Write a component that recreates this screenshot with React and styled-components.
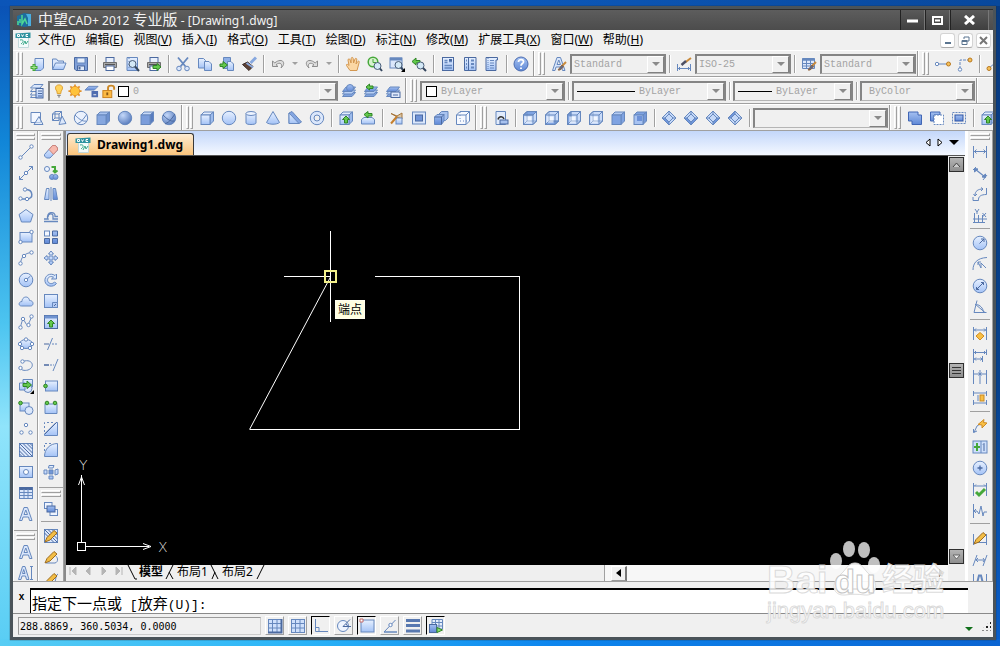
import React, { useState } from 'react';
import styled, { createGlobalStyle, css } from 'styled-components';

const GlobalStyle = createGlobalStyle`
  *, *::before, *::after {
    box-sizing: border-box;
  }

  body {
    margin: 0;
    font-family: 'Noto Sans', 'Noto Sans CJK SC', sans-serif;
    font-size: 12px;
    color: #000;
  }

  button, input, select {
    font: inherit;
    color: inherit;
    margin: 0;
    padding: 0;
    border: none;
    border-radius: 0;
    background: none;
  }
`;

/* ---------- icons ---------- */

const S = '#6688be';
const D = '#4a69a0';
const F = 'url(#face)';
const FD = 'url(#faceDark)';
const GREEN = '#46a83a';
const GOLD = '#f8bf45';
const GREY = '#8d8d8d';

const Defs = styled.svg`
  position: absolute;
  width: 0;
  height: 0;
`;

const Glyph = styled.svg`
  display: block;
  flex: none;
  width: ${props => props.$size || 16}px;
  height: ${props => props.$size || 16}px;
`;

const Cube = ({ front = F, top = '#e3edfd', side = '#9dbbec', children }) => (
  <>
    <path d="M2 5 5 2H14.5L11 5Z" fill={top} />
    <path d="M11 5 14.5 2V11L11 14.5Z" fill={side} />
    <rect x="2" y="5" width="9" height="9.5" fill={front} />
    {children}
  </>
);

const OpenCube = ({ fill }) => (
  <>
    <path d="M1.500 5 5 1.500H14.500V11L11 14.500H1.500Z" fill="#c9dbf9" />
    {fill && <path d={fill} fill="#7ea3e2" />}
    <rect x="3.500" y="6.500" width="6" height="6" fill="#f1f6ff" stroke="none" />
    <path d="M1.500 5H11V14.500M11 5 14.500 1.500" />
    <path d="M5 1.500V11H14.500M1.500 14.500 5 11" strokeOpacity=".6" />
    <path d="M1.500 5 5 1.500H14.500V11L11 14.500H1.500Z" />
  </>
);

const Diamond = ({ fill }) => (
  <>
    <path d="M8 1 15 8 8 15 1 8Z" fill="#c4d8f8" />
    <path d={fill} fill="#6f96dc" stroke="none" />
    <path d="M8 1 15 8 8 15 1 8ZM8 4 12 8 8 12 4 8ZM1 8H4M12 8H15M8 12V15M8 1V4" />
  </>
);

const Printer = () => (
  <>
    <rect x="4" y="1.500" width="8" height="5" fill="#e9f0fc" stroke={D} />
    <path d="M1.500 6.500H14.500V11.500H1.500Z" fill="#a8a8a8" stroke="#6d6d6d" />
    <path d="M3 8.500H13" stroke="#555" />
    <rect x="4" y="10" width="8" height="4.500" fill="#fff" stroke={D} />
  </>
);

const Lens = ({ x = 9, y = 9 }) => (
  <>
    <circle cx={x} cy={y} r="3.500" fill="#d4e9f7" stroke="#4a5e78" />
    <path d={`M${x + 2.5} ${y + 2.5} 15 15`} stroke="#34465e" strokeWidth="2" />
  </>
);

const Layers = () => (
  <>
    <path d="M5 9.500H14.500L11 13.500H1.500Z" fill="#7fa2de" />
    <path d="M5 7H14.500L11 11H1.500Z" fill="#b9d0f5" />
    <path d="M5 4H14.500L11 8.500H1.500Z" fill={FD} />
  </>
);

const Brush = () => (
  <>
    <path d="M15 6 11 10" stroke="#c98a3b" strokeWidth="2" />
    <path d="M11 9 12.500 11 9 14 7 14Z" fill="#4d6aa0" stroke="#94653a" />
  </>
);

const Dim = () => <path d="M1.500 2V14M14.500 2V14M2 7.500H14M4.500 5.500 2.500 7.500 4.500 9.500M11.500 5.500 13.500 7.500 11.500 9.500" />;

const LetterA = () => (
  <path d="M1.500 14.500 6 1.500H9.500L14 14.500H11.500L10.500 11H5L4 14.500ZM6 8.500H9.500L7.800 4Z" fill="#d9e6fb" />
);

const Pencil = () => (
  <path d="M2 14 4 9.500 11 2.500 14 5 7 12Z" fill="#f2bd45" stroke="#9a6a21" />
);

const UpArrow = () => (
  <path d="M8 6 11.500 9.500H9.500V13H6.500V9.500H4.500Z" fill="#63c94c" stroke="#2f8427" />
);

const Node = ({ x, y, c = '#fff' }) => <circle cx={x} cy={y} r="1.700" fill={c} />;

const ICONS = {
  New: <><path d="M6 2.500H14.500V12L12 14.500H6Z" fill={F} /><path d="M5 8V15M1.500 11.500H8.500" stroke={GREEN} strokeWidth="3" /><path d="M5 9V14M2.500 11.500H7.500" stroke="#a2e58d" /></>,
  Open: <><path d="M1.500 13.500V3H5.500L7 5H12.500V7" fill="#dbe7fb" /><path d="M1.500 13.500 4.500 7H15L12.500 13.500Z" fill={F} /></>,
  Save: <><path d="M1.500 1.500H14.500V14.500H3L1.500 13Z" fill="#7f9fd8" stroke={D} /><rect x="4" y="2" width="8" height="5" fill="#e6effc" /><rect x="4.500" y="10" width="7" height="4.500" fill="#dfe9f9" stroke={D} /><path d="M6.500 11V13.500" stroke={D} strokeWidth="2" /></>,
  Print: <Printer />,
  'Print preview': <><path d="M3 1.500H13.500V14.500H3Z" fill={F} /><path d="M5 2V14" strokeDasharray="1 2" /><Lens x={8.5} y={8} /></>,
  Publish: <><Printer /><path d="M7 9.500H11V7.500L15 11 11 14.500V12.500H7Z" fill="#63c94c" stroke="#2f8427" /></>,
  Cut: <><path d="M3 1.500 10.500 10.500M13 1.500 5.500 10.500" strokeWidth="1.800" /><circle cx="4" cy="12.500" r="2.300" fill="#dbe7fb" /><circle cx="12" cy="12.500" r="2.300" fill="#dbe7fb" /></>,
  Copy: <><path d="M1.500 2.500H6.500L8.500 4.500V12H1.500Z" fill={F} /><path d="M7.500 5.500H12L14.500 8V14.500H7.500Z" fill={F} /></>,
  Paste: <><path d="M4.500 1.500H11.500V12.500H4.500Z" fill="#8fb0e6" /><path d="M8.500 5.500H12L14.500 8V14.500H8.500Z" fill={F} /><path d="M1 8H4V5.500L8.500 9 4 12.500V10.500H1Z" fill="#63c94c" stroke="#2f8427" /></>,
  'Match properties': <><path d="M15 1.500 9.500 7" stroke="#87a8df" strokeWidth="3" /><path d="M1.500 8.500 6.500 6 12 10.500 8 14.500Z" fill="#5c4136" stroke="#3b2b25" /><path d="M5.500 7 12 11.500" stroke="#8caade" strokeWidth="2" /></>,
  Undo: <><path d="M2.500 5V10.500H8L6 8.700C10 5.500 13 8 11 12 17 7 12 1 4.800 6.900Z" fill="#ddd" stroke={GREY} /></>,
  Redo: <><path d="M13.500 5V10.500H8L10 8.700C6 5.500 3 8 5 12-1 7 4 1 11.200 6.900Z" fill="#ddd" stroke={GREY} /></>,
  Pan: <path d="M5 14.500 1.500 9.500C1 8 2.500 7.800 4 9.500L3 4C3 2.500 4.800 2.500 5.200 4L6 7 6.200 2.500C6.300 1 8 1 8.200 2.500L8.600 7 10 3C10.500 1.800 12 2.300 11.800 3.800L11 8 12.800 5.500C13.800 4.500 14.800 5.500 14 7L12 14.500Z" fill="#fbd7a4" stroke="#d39751" />,
  'Zoom realtime': <><circle cx="6" cy="6" r="4.800" fill="#d7f2cf" stroke={GREEN} strokeWidth="1.500" /><path d="M6 3V6.500H9" stroke={GREEN} /><Lens x={10.5} y={10} /></>,
  'Zoom window': <><rect x="1" y="2" width="12" height="10" fill="#dbe7fb" /><path d="M1 3H13" strokeWidth="3" /><Lens x={9.5} y={9} /><path d="M16 12V16H12Z" fill="#000" stroke="none" /></>,
  'Zoom previous': <><path d="M1 5.500 5 2V4.500H9V7H5V9Z" fill="#63c94c" stroke="#2f8427" /><Lens x={9.5} y={9.5} /></>,
  Properties: <><rect x="2.500" y="1.500" width="11" height="13" fill={F} stroke={D} /><path d="M4.500 4.500H7.500M4.500 6.500H7.500M9 5.500H12M4.500 9.500H12M4.500 12H12" strokeWidth="1.300" /><rect x="9" y="3" width="3" height="2" fill={D} stroke="none" /></>,
  'Design center': <><path d="M2.500 1.500H14V14.500H2.500ZM6.500 1.500V14.500" fill={F} stroke={D} /><path d="M9 4.500H12M9 8H12M9 11.500H12M4 4.500H5M4 8H5M4 11.500H5" strokeWidth="2" /></>,
  'Tool palettes': <><path d="M2 1.500H13.500V4H12V14.500H2Z" fill={F} stroke={D} /><path d="M4 2V14" strokeDasharray="1 1" /><path d="M6 4.500H10M6 7H10M6 9.500H10M6 12H10" /></>,
  Help: <><circle cx="8" cy="8" r="7" fill={FD} stroke="#4a6bb0" /><path d="M5.500 6C5.500 2.500 11 3 10.500 6 10.300 7.500 8 7.800 8 9.800M8 11.500V13" stroke="#fff" strokeWidth="1.800" /></>,
  'Text style': <><LetterA /><Brush /></>,
  'Dimension style': <><path d="M1.500 8V15M14.500 8V15M2 12.500H14M4 11 2.500 12.500 4 14M12 11 13.500 12.500 12 14" /><path d="M15 2 9 6.500" stroke="#c98a3b" strokeWidth="2" /><path d="M10 5 5.500 9" stroke="#4d4f63" strokeWidth="2.500" /></>,
  'Table style': <><path d="M1.500 2.500H13.500V12.500H1.500Z" fill="#dfe9fb" /><path d="M1.500 3.500H13.500" strokeWidth="2.500" /><path d="M1.500 7.500H13.500M1.500 10H13.500M5.500 3V12.500M9.500 3V12.500" /><Brush /></>,
  'Snap from': <><path d="M3 8H13" /><Node x={2} y={8} /><circle cx="13.500" cy="8" r="2" fill="#f6c05a" stroke="#b87820" /></>,
  'Snap to extension': <><path d="M3 13V4H12" strokeDasharray="3 1" /><Node x={3} y={13.5} /><circle cx="13" cy="4" r="2" fill="#f6c05a" stroke="#b87820" /></>,
  'Snap to endpoint': <><path d="M3 12 14 3" /><circle cx="3" cy="12.500" r="2" fill="#f6c05a" stroke="#b87820" /></>,

  'Layer properties': <><path d="M5 1.500H14L11 5H1.500Z" fill="#dbe7fb" /><path d="M3.500 6 1.500 8.500H7M3 9.500 1.500 12H7M3 12.500 1.500 14.500H7" /><rect x="7" y="5.500" width="7" height="9.500" fill={F} stroke={D} /><path d="M9 8H13M9 10.500H13M9 13H13" stroke={D} /></>,
  'Layer current': <><Layers /><circle cx="9" cy="5" r="3.500" fill={FD} /></>,
  'Layer previous': <><Layers /><path d="M3 4 6.500 1V3H10V5.500H6.500V7Z" fill="#63c94c" stroke="#2f8427" /></>,
  'Layer states': <><Layers /><rect x="6" y="9" width="9" height="5.500" fill="#dfe9fb" stroke={D} /><path d="M8 12H13" stroke={D} /></>,
  Bulb: <><path d="M8 1C3.500 1 3 5.500 5.500 8L6 11H10L10.500 8C13 5.500 12.500 1 8 1Z" fill="#ffd35d" stroke="#d99723" /><path d="M6 13H10M7 14.800H9" stroke="#8a8a8a" strokeWidth="1.500" /></>,
  Sun: <><path d="M8 .5V15.500M.5 8H15.500M2.700 2.700 13.300 13.300M13.300 2.700 2.700 13.300" stroke="#e2912a" strokeWidth="2" /><circle cx="8" cy="8" r="5.300" fill="#ffc33c" stroke="#e2912a" /></>,
  Plot: <><path d="M5 2.500H15L11 6.500H1Z" fill={FD} /><path d="M8 8.500H15M9 10H14V13H9Z" stroke="#4f6db0" strokeWidth="2" /></>,
  Lock: <><path d="M7.500 7V4C7.500 1 14 1 14 4V6" stroke="#cb8724" strokeWidth="2" /><rect x="2" y="7" width="9.500" height="7.500" fill="#fbb944" stroke="#c87f1c" /><path d="M6.700 9V12" stroke="#8a5814" strokeWidth="2" /></>,

  '2D wireframe': <><path d="M2 2.500H11.500V12.500H2Z" fill="#f3f7ff" /><path d="M10 6.500 14 14.500H5Z" fill="#dbe7fb" fillOpacity=".6" /></>,
  '3D wireframe': <><path d="M1.500 4 4 1.500H10.500V8L8 10.500H1.500ZM1.500 4H8V10.500M8 4 10.500 1.500M4 1.500V8H10.500M1.500 10.500 4 8" /><path d="M11 6 15 13.500 8 14.500 Z" fill="#dbe7fb" /></>,
  '3D hidden': <><circle cx="8" cy="8" r="6.700" fill="#eaf1fd" /><path d="M2 5C5 8 9 12 13.500 11M14 4C11 8 9 12 4 14" /></>,
  'Flat shaded': <Cube front="#86a7df" top="#a9c3ef" side="#6d90ce" />,
  'Gouraud shaded': <circle cx="8" cy="8" r="6.700" fill="url(#ball)" />,
  'Flat with edges': <Cube front="#7b9ddb" top="#c9daf7" side="#587cc0" />,
  'Gouraud with edges': <><circle cx="8" cy="8" r="6.700" fill="url(#ball)" /><path d="M2 5C5 8 9 12 13.500 11M14 4C11 8 9 12 4 14" stroke={D} /></>,
  Box: <Cube />,
  Sphere: <circle cx="8" cy="8" r="6.700" fill={F} />,
  Cylinder: <><path d="M3 3.500V13C3 15 13 15 13 13V3.500" fill={F} /><ellipse cx="8" cy="3.500" rx="5" ry="2" fill="#eef4ff" /></>,
  Cone: <path d="M8 1.500 14.500 12.500C12 14.800 4 14.800 1.500 12.500Z" fill={F} />,
  Wedge: <><path d="M2 13.500V3L5 1.500 14.500 12 12 13.500Z" fill="#84a6e2" /><path d="M2 3 12 13.500H2Z" fill={F} /></>,
  Torus: <><circle cx="8" cy="8" r="6.700" fill="#dbe7fb" /><circle cx="8" cy="8" r="3" fill="#f0f0f0" /></>,
  Extrude: <><Cube /><UpArrow /></>,
  Revolve: <><path d="M1.500 9.500 4 7.500H12L14.500 9.500V14H1.500Z" fill={F} /><path d="M4 4.500 8 1.500V3.500H12V6H8V8Z" fill="#63c94c" stroke="#2f8427" /></>,
  Slice: <><path d="M2 3.500 8 6 13 3V9L9 7.500Z" fill="#d9c6a8" stroke="#a5753b" /><rect x="7" y="8" width="6" height="6" fill={F} /><path d="M2 13.500 8 6.500" stroke="#c57f2d" strokeWidth="2" /></>,
  Section: <><rect x="1.500" y="2" width="13" height="12" fill="#dbe7fb" /><rect x="4.500" y="5" width="7" height="6" fill="#6f93d8" stroke={D} /></>,
  Interfere: <><path d="M6 4 8.500 1.500H15V8L12.500 10.500H6Z" fill="#a9c3ef" /><path d="M1.500 7 4 4.500H11V11L8.500 14.500H1.500Z" fill={FD} /><path d="M1.500 7H8.500V14.500M8.500 7 11 4.500" stroke={D} /></>,
  'Solid profile': <><path d="M1.500 5 5 1.500H14.500V11L11 14.500H1.500ZM1.500 5H11V14.500M11 5 14.500 1.500" fill="#f6f9ff" /><path d="M5 2V11H14" strokeDasharray="1 2" /></>,
  'Named views': <><path d="M3 1.500H12.500V14.500H3Z" fill="#e2ecfc" /><path d="M5 9.500C6 6 10 6 11 9" stroke="#333" strokeWidth="1.500" /><rect x="7" y="10" width="8" height="4" fill="#a8c2ef" stroke={D} /></>,
  'Top view': <OpenCube fill="M1.500 5 5 1.500H14.500L11 5Z" />,
  'Bottom view': <OpenCube fill="M1.500 14.500 5 11H14.500L11 14.500Z" />,
  'Left view': <OpenCube fill="M1.500 5 5 1.500V11L1.500 14.500Z" />,
  'Right view': <OpenCube />,
  'Front view': <Cube front="#7fa3e2" top="#b5ccf3" side="#7fa3e2" />,
  'Back view': <Cube front="#a8c3f2" top="#7fa3e2" side="#7598d8"><rect x="5" y="6" width="5" height="5" fill="#6c91d8" stroke="none" /></Cube>,
  'SW isometric': <Diamond fill="M1 8 4 8 8 12V15Z" />,
  'SE isometric': <Diamond fill="M8 15V12L12 8H15ZM1 8H4L8 12V15Z" />,
  'NE isometric': <Diamond fill="M8 12 12 8H15L8 15Z" />,
  'NW isometric': <Diamond fill="M1 8H4L8 4V1Z" />,
  Union: <path d="M1.500 2H11V5H14.500V14.500H5V11H1.500Z" fill={FD} stroke="#4166b5" />,
  Subtract: <><path d="M1.500 2H11V5H5V11H1.500Z" fill={FD} stroke="#4166b5" /><path d="M5 5H14.500V14.500H5Z" fill="#fff" strokeDasharray="2 1" /></>,
  Intersect: <><path d="M1.500 2.500H14.500V13.500H1.500Z" strokeDasharray="2 1" /><rect x="4" y="5" width="8" height="6" fill={FD} stroke="#2f55a5" /></>,
  'Extrude faces': <><Cube /><UpArrow /></>,

  Line: <><path d="M3 13 13 3" /><Node x={2.5} y={13.5} /><Node x={13.5} y={2.5} /></>,
  'Construction line': <><path d="M1.500 14.500 14.500 1.500M1.500 11V14.500H5M11 1.500H14.500V5" /><Node x={8} y={8} /></>,
  Polyline: <><path d="M3 13H9C16 13 15 4 8.500 3.500" strokeWidth="1.500" /><Node x={2.500} y={12.5} /><Node x={9} y={13} /><Node x={7} y={3.5} /></>,
  Polygon: <path d="M8 1.500 15 6.500 12.500 14H3.500L1 6.500Z" fill={F} />,
  Rectangle: <><rect x="2" y="3.500" width="12" height="9.500" fill={F} /><Node x={2.500} y={13} /><Node x={13.500} y={3} /></>,
  Arc: <><path d="M2.500 13.500C3 7 7 3 13.500 2.500" /><Node x={2.500} y={13.5} /><Node x={6} y={6} /><Node x={13.500} y={2.5} /></>,
  Circle: <><circle cx="8" cy="8" r="6.800" fill={F} /><path d="M8 8 12.500 4" /><Node x={8} y={8} /></>,
  'Revision cloud': <path d="M3.500 13C0 13 .5 8.500 4 8.500 4 3 11 2.500 11.500 7.500 16 7.500 16 13 12.500 13Z" fill={F} />,
  Spline: <><path d="M2.500 13.500C4 6 5 4 7 8 9 12 10 12 13.500 3" /><Node x={2.500} y={13.5} /><Node x={5} y={5} /><Node x={10.500} y={11} /><Node x={13.500} y={2.5} /></>,
  Ellipse: <><ellipse cx="8" cy="8" rx="6.500" ry="4.500" fill={F} /><Node x={2} y={8} /><Node x={14} y={8} /><Node x={8} y={3.5} /><Node x={4} y={12} /><Node x={12} y={12} /></>,
  'Ellipse arc': <><path d="M5 4.500C14 1 18 10 10 13 6 14 3 13 2.500 11" /><Node x={4.5} y={4.5} /><Node x={2.5} y={11} /></>,
  'Insert block': <><path d="M5 1.500H14.500V9H5Z" fill={F} /><circle cx="10" cy="10.500" r="4" fill="#dbe7fb" /><path d="M1.500 5H7V12H1.500Z" fill={F} /><path d="M5 5.500H9V3L13.500 7 9 10.500V8.500H5Z" fill="#63c94c" stroke="#2f8427" /><path d="M16 12V16H12Z" fill="#000" stroke="none" /></>,
  'Make block': <><rect x="2" y="3" width="9" height="8" fill={F} /><circle cx="11" cy="10.500" r="4" fill="#dbe7fb" /><circle cx="2.500" cy="3" r="1.800" fill="#63c94c" stroke="#2f8427" /></>,
  Point: <><Node x={8} y={4} /><Node x={3.500} y={11.5} /><Node x={12.500} y={11.5} /></>,
  Hatch: <><rect x="1.500" y="1.500" width="13" height="13" fill="#dbe7fb" /><path d="M1.500 5 11 14.500M1.500 9 7 14.500M1.500 1.500 14.500 14.500M5 1.500 14.500 11M9 1.500 14.500 7M12 1.500 14.500 4M1.500 12 4 14.500" stroke={D} /></>,
  Region: <><rect x="1.500" y="2.500" width="13" height="11" fill={F} /><circle cx="8" cy="8" r="2.500" fill="#fff" /></>,
  Table: <><rect x="1.500" y="2.500" width="13" height="11" fill="#dbe7fb" /><path d="M1.500 3.500H14.500" stroke={D} strokeWidth="3" /><path d="M1.500 7.500H14.500M1.500 10.500H14.500M6 4V13.500M10 4V13.500" /></>,
  'Multiline text': <LetterA />,
  'Single text': <LetterA />,
  'Edit text': <><path d="M.5 14.500 4.500 1.500H7L11 14.500H8.500L7.500 11H4L3 14.500ZM4.500 8.500H7L5.700 4.500Z" fill="#d9e6fb" /><path d="M13.500 2V14.500M12 1.500H15M12 14.500H15" /></>,

  Erase: <><path d="M1.500 10.500 9.500 1.500H12.500L14.500 4V6L7 14H3.500L1.500 12Z" fill={F} /><path d="M6 5.500 9.500 1.500H12.500L14.500 4V6L10.500 10.300Z" fill="#f7b9ae" stroke="#cf8479" /></>,
  'Copy object': <><circle cx="4" cy="4" r="2.500" fill="#eef4ff" /><circle cx="9" cy="12" r="2.500" fill={FD} /><circle cx="12.500" cy="12" r="2.500" fill={FD} /><path d="M8.500 2H12V7M10 5.500 12 7.500 14.500 5.500" stroke={GREEN} strokeWidth="2" /></>,
  Mirror: <><path d="M3.500 2.500H6V13.500H1.500Z" fill={F} /><path d="M12.500 2.500H10V13.500H14.500Z" fill={FD} /><path d="M8 1V15" /></>,
  Offset: <path d="M1 13.500H15M1 11H5C2 4 13 2 12 8.500H15M5 9C5 5 10 5 10 8V11H15" strokeWidth="1.300" />,
  Array: <><rect x="1.500" y="2" width="5" height="5" fill="#f3f7ff" /><path d="M9.500 2H14.500V7H9.500ZM1.500 9.500H6.500V14.500H1.500ZM9.500 9.500H14.500V14.500H9.500Z" fill={FD} stroke={D} /></>,
  Move: <path d="M8 1 10.500 4H9V7H12V5.500L15 8 12 10.500V9H9V12H10.500L8 15 5.500 12H7V9H4V10.500L1 8 4 5.500V7H7V4H5.500Z" fill={F} />,
  Rotate: <path d="M13.500 2V7H8.500L10.500 5.200C6 3 3.500 7 5 9.800 6.500 12.300 10 12 11.500 10L13.500 11.500C10 16 3 14.500 2 9.500 1 4 7 0 12 3.500Z" fill={F} />,
  Scale: <><rect x="1.500" y="1.500" width="13" height="13" fill={F} /><path d="M9.500 9.500H14.500V14.500H9.500Z" fill="#b3caf4" /><path d="M11 13 13 11" stroke={D} /></>,
  Stretch: <><rect x="1.500" y="1.500" width="13" height="13" fill={F} stroke={D} /><path d="M1.500 3H14.500" stroke="#6f93d0" strokeWidth="3" /><UpArrow /></>,
  Trim: <><path d="M1 8H6" stroke={D} /><path d="M9 8H15" strokeDasharray="2 1" /><path d="M4.500 14 9.500 2" /></>,
  Extend: <><path d="M1 8H6" stroke={D} strokeWidth="1.500" /><path d="M7 8H11" strokeDasharray="2 1" /><path d="M10 14 15 2" /></>,
  'Break at point': <><rect x="2.500" y="3" width="12" height="10" fill={F} /><circle cx="2.500" cy="8" r="1.800" fill="#63c94c" stroke="#2f8427" /></>,
  Break: <><path d="M2 3.500V13.500H14V3.500M6 4H10" fill={F} /><circle cx="4" cy="3" r="1.800" fill="#63c94c" stroke="#2f8427" /><circle cx="12" cy="3" r="1.800" fill="#63c94c" stroke="#2f8427" /></>,
  Chamfer: <><path d="M14.500 1.500V14.500H1.500V13L13 1.500Z" fill={F} /><path d="M1.500 11V1.500H11" strokeDasharray="2 2" /><path d="M2 13 13.500 1.500" stroke={D} /></>,
  Fillet: <><path d="M14.500 1.500V14.500H1.500C1.500 7 7 1.500 14.500 1.500Z" fill={F} /><path d="M1.500 9V1.500H9" strokeDasharray="2 2" /></>,
  Explode: <><path d="M6 6H10V10H6Z" fill="#7196d6" /><path d="M6 1.500H11L10 4H5.500ZM6 12H10V15H6ZM1 6H4V10H1ZM12 6 15 5V10L12 11Z" fill={F} /></>,
  'Draw order': <><rect x="1.500" y="1.500" width="7.500" height="6" fill="#eef4ff" /><rect x="7" y="8.500" width="7.500" height="6" fill="#eef4ff" /><rect x="4" y="5" width="8" height="6" fill={FD} stroke={D} /></>,
  'Edit hatch': <><rect x="1.500" y="1.500" width="13" height="13" fill="#dbe7fb" /><path d="M1.500 5 11 14.500M1.500 1.500 14.500 14.500M5 1.500 14.500 11M9 1.500 14.500 7" stroke={D} /><Pencil /></>,
  'Edit polyline': <><path d="M3 14H12C16 13 15 7 11 6" /><Pencil /></>,
  'Edit spline': <><path d="M10 14C13 14 12 4 15 3" /><Pencil /></>,

  'Linear dimension': <Dim />,
  'Aligned dimension': <><path d="M3 4 13 12" strokeWidth="1.300" /><path d="M1 5 4 2M11 15 15 10" /><path d="M2.500 7 2.500 3.500 6 4ZM13.500 9 13.500 12.500 10 12Z" fill={S} /></>,
  'Arc length': <path d="M1 14.500H6.500C6 10.500 9 8.500 14.500 8.500V2M1 11V14.500M3 9.500C3 5 6 3 11 3M1.500 8 3 10 5 8M9 1.500 11 3 9 5" />,
  Ordinate: <path d="M2.500 5V14.500M6.500 7V14.500M1 11H15M1 14.500H13M10.500 7V14.500M3 1 5 4 7 1M5 4V6M10.500 5 14 9M14 5 10.500 9" />,
  Radius: <><circle cx="8" cy="8" r="6.800" fill={F} /><path d="M7.500 8.500 12 4M9 4H12V7" stroke={D} /></>,
  Jogged: <path d="M1 14C1 7 5 2 15 1.500M6 6 9 12V7L14 12M6 9V6H9" />,
  Diameter: <><circle cx="8" cy="8" r="6.800" fill={F} /><path d="M4.500 11.500 11.500 4.500M9 4.500H11.500V7M4.500 9V11.500H7" stroke={D} /></>,
  Angular: <path d="M5 1.500 2 13.500H14.500M4.500 5.500C8 6 11 9 11.500 13M3 5 13 13.500" />,
  'Quick dimension': <><path d="M1.500 1V14M14.500 1V14M2 4H14M4 2.500 2.500 4 4 5.500M12 2.500 13.500 4 12 5.500" /><path d="M8 6.500 12 10 8 14 4 10Z" fill={GOLD} stroke="#d08c22" /></>,
  Baseline: <path d="M1.500 1V15M14.500 1.500V7M2 4.500H14M4 3 2.500 4.500 4 6M12 3 13.500 4.500 12 6M10.500 8V14M2 11H10M4 9.500 2.500 11 4 12.500M8.500 9.500 10 11 8.500 12.500" />,
  Continue: <path d="M1.500 1V15M8 1V15M14.500 1V15M2 5H14M6.500 3.500 8 5 6.500 6.500M9.500 3.500 8 5 9.500 6.500" />,
  'Dimension space': <><path d="M1.500 1V6M14.500 1V6M1.500 3H14.500M1.500 10V15M14.500 10V15M1.500 13H14.500M6 5V11" /><rect x="8" y="5" width="4" height="6" fill={GOLD} stroke="#c98a24" /></>,
  Leader: <><path d="M2 14.500 5 8 11 4M1.500 11V14.500L5 13" /><path d="M6 6.500 12 1.500 11.500 4.500 15 5 10 10 10 7Z" fill={GOLD} stroke="#d08c22" /></>,
  Tolerance: <><rect x="1" y="2" width="14" height="12" fill="#cfe0fb" /><path d="M9 2V14" /><path d="M5 4V12M2 8H8" stroke={GREEN} strokeWidth="2" /><path d="M11 5.500 12 4.500V12" stroke={D} /></>,
  'Center mark': <><circle cx="8" cy="8" r="6.800" fill={F} /><path d="M8 5.500V10.500M5.500 8H10.500" stroke={D} strokeWidth="1.300" /></>,
  Inspect: <><path d="M1.500 1V14M14.500 1V14M2 4H14M4 2.500 2.500 4M12 2.500 13.500 4" /><path d="M4 10 7 13 13 7" stroke={GREEN} strokeWidth="3" /></>,
  'Jogged linear': <path d="M1.500 1V15M2 8H5L7 11 9 3 11 13 12 9H15M4 6 2 8 4 10" />,
  'Dimension edit': <><path d="M1.500 4V15M14.500 4V15M2 12.500H14" /><Pencil /></>,
  'Dimension oblique': <path d="M1 14 5 3M11 14 15 3M3.500 8H12.500M6 6 4 8 6 10M11 6 12.500 8 11 10" />,
  'Dimension text': <><path d="M1.500 1V15M14.500 1V15" /><path d="M4 14.500 7 2.500H9L12 14.500M5.500 10H10.500" strokeWidth="2" /></>,

  Snap: <><rect x="1.500" y="1.500" width="13" height="13" fill="#cfe0fb" /><path d="M1.500 5.500H14.500M1.500 10H14.500M5.500 1.500V14.500M10 1.500V14.500" /><path d="M1 14.500H14.500V1" stroke={D} strokeWidth="2" /></>,
  Grid: <><rect x="1.500" y="1.500" width="13" height="13" fill="#cfe0fb" /><path d="M1.500 5.500H14.500M1.500 10H14.500M5.500 1.500V14.500M10 1.500V14.500" /></>,
  Ortho: <path d="M2.500 1V13.500H15M2.500 9.500H6V13.500" />,
  Polar: <><circle cx="7" cy="8" r="5.500" fill="#eef4ff" /><path d="M7 8.500 14 1.500M7 8.500H15M10 6 12 8.500" stroke={D} /></>,
  'Object snap': <><rect x="2" y="2" width="13" height="12" fill={F} /><path d="M1 1H4V4H1Z" fill="#fff" stroke="#c26a6a" /></>,
  'Object tracking': <><path d="M2 14 13.500 2" /><path d="M2 14H15" strokeWidth="1.500" /><Node x={8.5} y={7} /></>,
  'Line weight': <path d="M1 2.500H15M1 7.500H15M1 13H15" stroke="#5878b0" strokeWidth="3" />,
  'Model space': <><path d="M4 1.500H14.500V11H4ZM4 4.500H14.500M4 8H14.500M7.500 1.500V11M11 1.500V11" fill="#e6effc" /><rect x="1.500" y="6.500" width="7" height="8" fill={FD} stroke={D} /><path d="M9 9.500 14.500 12 9 14.500Z" fill="#8be06f" stroke="#2f8427" /></>,
};

const Icon = ({ name, size }) => (
  <Glyph $size={size} viewBox="0 0 16 16" fill="none" stroke={S} aria-hidden="true">
    {ICONS[name]}
  </Glyph>
);

const Logo = () => (
  <Glyph viewBox="0 0 16 16" fill="none" aria-hidden="true">
    <path d="M1 4 8 1 15 2V14L8 15 1 13Z" fill="#1d6d9e" />
    <path d="M10 2H15V14H12V6Z" fill="#4aaee0" />
    <path d="M2 9V13M4 7V11M6 3V12L9 7 11 12" stroke="#4fd894" strokeWidth="1.500" />
  </Glyph>
);

const DwgFile = () => (
  <Glyph viewBox="0 0 16 16" fill="none" aria-hidden="true">
    <path d="M3.500 5H13.500V15.500H3.500Z" fill="#f4fbfb" stroke="#c3d9db" />
    <path d="M.500 1.500 15.500 .500V6H.500Z" fill="#2f93a0" />
    <path d="M2.500 2.500V4.500H4.500V2.500ZM6.500 2.500 7.500 4.500 8.500 2.500M13 2.500H11V4.500H13" stroke="#fff" />
    <path d="M5 8C9 7 9 10 6 12M8 13 10 9 11 12 13 9" stroke="#3aa888" />
  </Glyph>
);

/* ---------- desktop and window frame ---------- */

const Desktop = styled.div`
  height: 100vh;
  display: flex;
  padding: 6px 4px 6px 10px;
  background:
    linear-gradient(90deg, #0b55b8, #0d5cc0 40%, #08489c) top / 100% 6px no-repeat,
    linear-gradient(90deg, #58cdf4, #2ab4f8 30%, #0d86ee 55%, #0a64d2) bottom / 100% 7px no-repeat,
    linear-gradient(180deg, #0a50b4, #1186d8 22%, #4cc4f0 50%, #90e4fb 66%, #58cdf4) left / 12px 100% no-repeat,
    linear-gradient(180deg, #083a80, #07428e 60%, #0a60cc) right / 6px 100% no-repeat;
`;

const Window = styled.main`
  position: relative;
  flex: 1;
  min-width: 0;
  display: flex;
  flex-direction: column;
  border: 3px solid #4a5359;
  background: #f0f0f0;
  box-shadow: 0 0 1px #1b2a38;
`;

const TitleBar = styled.header`
  display: flex;
  align-items: center;
  height: 21px;
  padding: 0 4px 0 3px;
  gap: 6px;
  background: linear-gradient(#5d5d5d, #4c4c4c);
  border-top: 1px solid #2c2c2c;
`;

const Title = styled.h1`
  flex: 1;
  margin: 0;
  color: #f2f2f2;
  font-size: 12px;
  font-weight: 400;
  line-height: 18px;
  white-space: pre;
`;

const Cjk = styled.span`
  font-size: 15px;
`;

const WindowButton = styled.button`
  display: grid;
  place-items: center;
  align-self: stretch;
  width: ${props => (props.$wide ? 39 : 25)}px;
  border-left: 1px solid #222;
  border-right: 1px solid #777;
  background: linear-gradient(#5a5a5a, #3f3f3f);
`;

const WindowButtons = styled.div`
  display: flex;
  align-self: stretch;
`;

/* ---------- menu ---------- */

const MenuBar = styled.nav`
  display: flex;
  align-items: center;
  height: 20px;
  padding: 0 2px;
`;

const MenuList = styled.div`
  flex: 1;
  display: flex;
  gap: 10px;
  margin-left: 7px;
`;

const MenuItem = styled.button`
  line-height: 18px;
  white-space: nowrap;
`;

const ChildButtons = styled.div`
  display: flex;
  gap: 3px;
`;

const ChildButton = styled.button`
  display: grid;
  place-items: center;
  width: 15px;
  height: 15px;
  border: 1px solid #d4d4d4;
  border-bottom-color: #aaa;
  border-radius: 3px;
  background: #fff;
`;

/* ---------- toolbars ---------- */

const ToolRow = styled.div`
  display: flex;
  height: 27px;
  overflow: hidden;
  border-top: 1px solid #fff;
  border-bottom: 1px solid #a0a0a0;
`;

const ToolGroup = styled.div`
  display: flex;
  flex: none;
  align-items: center;
  padding-right: 1px;
  border-right: 1px solid #9a9a9a;
  box-shadow: 1px 0 0 #fff;
  margin-right: 1px;

  &:last-child {
    border-right-color: ${props => (props.$open ? 'transparent' : '#9a9a9a')};
  }
`;

const gripLine = css`
  border: 1px solid #fff;
  border-right-color: #a0a0a0;
  border-bottom-color: #a0a0a0;
`;

const Grip = styled.div`
  display: flex;
  flex: none;
  justify-content: center;
  gap: 1px;
  width: 13px;
  height: 23px;

  &::before, &::after {
    content: '';
    width: 3px;
    ${gripLine}
  }
`;

const SideGrip = styled.div`
  display: flex;
  flex: none;
  flex-direction: column;
  gap: 1px;
  padding: 2px 2px 1px;

  &::before, &::after {
    content: '';
    height: 3px;
    ${gripLine}
  }
`;

const Divider = styled.div`
  flex: none;
  width: 7px;
  height: 18px;
  border-left: 3px solid transparent;
  background: linear-gradient(90deg, #a0a0a0 1px, #fff 1px, #fff 2px, transparent 2px) no-repeat;
`;

const SideDivider = styled.div`
  flex: none;
  height: 1px;
  margin: 2px 2px 3px;
  background: #a0a0a0;
`;

const ToolButton = styled.button`
  display: grid;
  place-items: center;
  flex: none;
  width: 22px;
  height: 22px;
`;

const CaretButton = styled.button`
  display: grid;
  place-items: center;
  width: 12px;
  height: 22px;
`;

const Caret = styled.span`
  border: ${props => props.$size || 3}px solid transparent;
  border-top-color: ${props => props.$color || '#a0a0a0'};
  border-bottom-width: 0;
`;

const Field = styled.div`
  position: relative;
  display: flex;
  align-items: center;
  flex: none;
  width: ${props => props.$width}px;
  height: 20px;
  gap: 4px;
  padding-left: ${props => props.$inset || 2}px;
  border: 2px solid #858585;
  border-bottom: 1px solid #b5b5b5;
  font-family: 'Liberation Mono', monospace;
  font-size: 10px;
  color: #a3a3a3;
`;

const Choice = styled.select`
  flex: 1;
  min-width: 0;
  height: 16px;
  padding-right: 17px;
  appearance: none;
  outline: none;
`;

const Drop = styled.span`
  position: absolute;
  top: 0;
  right: 0;
  bottom: 0;
  width: 17px;
  display: grid;
  place-items: center;
  pointer-events: none;
  border: 1px solid #fff;
  border-right-color: #808080;
  border-bottom-color: #808080;
  background: #f0f0f0;
`;

const LayerFlags = styled.span`
  display: flex;
  align-items: center;
  gap: 2px;
`;

const Swatch = styled.span`
  flex: none;
  width: 11px;
  height: 11px;
  border: 1px solid #000;
  background: #fff;
`;

const Stroke = styled.span`
  flex: none;
  width: ${props => props.$length}px;
  height: 1px;
  background: #000;
`;

const Tools = ({ names }) => names.map((name, i) => (
  name === '|' ? <Divider key={i} /> : (
    <ToolButton key={name} type="button" aria-label={name}>
      <Icon name={name} />
    </ToolButton>
  )
));

const Combo = ({ label, value, width, inset, children }) => (
  <Field $width={width} $inset={inset}>
    {children}
    <Choice aria-label={label} defaultValue={value}>
      <option value={value}>{value}</option>
    </Choice>
    <Drop><Caret $size={4} $color="#8a8a8a" /></Drop>
  </Field>
);

/* ---------- work area ---------- */

const Work = styled.div`
  flex: 1;
  min-height: 0;
  display: flex;
`;

const SideColumn = styled.div`
  flex: none;
  width: ${props => props.$width}px;
  overflow: hidden;
  border-left: 1px solid #fff;
  border-right: 1px solid #a0a0a0;
`;

const SideGroup = styled.div`
  padding-bottom: ${props => (props.$tail ? 5 : 0)}px;
  border-bottom: ${props => (props.$tail ? '1px solid #a0a0a0' : 'none')};
`;

const SideButton = styled(ToolButton)`
  height: 21px;
  margin: 0 auto;

  &:nth-of-type(3n) {
    height: 22px;
  }
`;

const SideTools = ({ names, tail }) => (
  <SideGroup $tail={tail}>
    <SideGrip />
    {names.map((name, i) => (
      name === '|' ? <SideDivider key={i} /> : (
        <SideButton key={name} type="button" aria-label={name}>
          <Icon name={name} />
        </SideButton>
      )
    ))}
  </SideGroup>
);

const Document = styled.section`
  flex: 1;
  min-width: 0;
  display: flex;
  flex-direction: column;
  border-left: 2px solid #8a8a8a;
  border-right: 2px solid #fff;
`;

const TabBar = styled.div`
  display: flex;
  justify-content: space-between;
  flex: none;
  height: 25px;
  padding: 2px 6px 0 1px;
  border-bottom: 1px solid #555;
  background: linear-gradient(#c3d7fa, #f4f8ff);
`;

const FileTab = styled.button`
  display: flex;
  align-items: center;
  gap: 6px;
  padding: 0 10px 0 7px;
  border: 1px solid #3a3a3a;
  border-bottom: none;
  border-radius: 3px 3px 0 0;
  background: linear-gradient(#fdebd2, #fbc57d);
  font-weight: 700;
`;

const TabArrows = styled.div`
  display: flex;
  align-items: center;
  gap: 6px;
  padding-bottom: 4px;
`;

const ArrowButton = styled.button`
  display: grid;
  place-items: center;
  height: 12px;
`;

const Viewport = styled.div`
  flex: 1;
  min-height: 0;
  display: flex;
`;

const Canvas = styled.div`
  position: relative;
  flex: 1;
  min-width: 0;
  overflow: hidden;
  background: #000;
`;

const Drawing = styled.svg`
  position: absolute;
  inset: 0;
  width: 100%;
  height: 100%;
`;

const UcsMark = styled.svg`
  position: absolute;
  left: 9px;
  bottom: 0;
  width: 96px;
  height: 112px;
  font-family: 'DejaVu Sans', sans-serif;
  font-size: 14px;
  font-weight: 200;
`;

const SnapTip = styled.div`
  position: absolute;
  left: 269px;
  top: 144px;
  padding: 0 2px;
  border: 1px solid #fffff0;
  background: #ffffe1;
  line-height: 17px;
`;

const VScroll = styled.div`
  flex: none;
  display: flex;
  flex-direction: column;
  justify-content: space-between;
  width: 17px;
  padding: 1px;
  background: #ececec;
`;

const ScrollButton = styled.button`
  display: grid;
  place-items: center;
  width: 15px;
  height: 15px;
  margin-top: ${props => (props.$thumb ? 20 : 0)}px;
  border: 1px solid #2f2f2f;
  background: linear-gradient(#b4b4b4, #8e8e8e);
`;

const Lines = styled.span`
  width: 9px;
  height: 7px;
  background: repeating-linear-gradient(#333 0 1px, transparent 1px 3px);
`;

const LayoutBar = styled.div`
  flex: none;
  display: flex;
  justify-content: space-between;
  height: 16px;
  padding-right: 17px;
  background: #efefef;
`;

const LayoutTabs = styled.div`
  display: flex;
  align-items: flex-start;
`;

const Steppers = styled.div`
  display: flex;
  width: 61px;
  justify-content: space-between;
  padding: 0 4px 0 2px;
`;

const LayoutTab = styled.button`
  padding: 0 2px;
  line-height: 13px;
  font-weight: ${props => (props.$active ? 700 : 400)};
`;

const Slash = styled.svg`
  width: 10px;
  height: 15px;
  stroke: #000;
  fill: none;
`;

const HScroll = styled.div`
  display: flex;
  align-items: center;
  justify-content: space-between;
  width: 39%;
  border-left: 1px solid #a0a0a0;
  background: #f7f7f7;
`;

const HScrollButton = styled.button`
  display: grid;
  place-items: center;
  width: 16px;
  height: 15px;
  border: 1px solid #fff;
  border-right: 2px solid #777;
  border-bottom-color: #999;
  margin-left: 6px;
  background: #f0f0f0;
`;

/* ---------- command line and status ---------- */

const CommandBar = styled.div`
  flex: none;
  display: flex;
  height: 32px;
  padding: 6px 25px 0 0;
  border-top: 1px solid #a0a0a0;
`;

const CommandHandle = styled.button`
  width: 17px;
  padding-bottom: 8px;
  font-family: 'Liberation Sans', sans-serif;
  font-size: 10px;
  font-weight: 700;
  line-height: 10px;
`;

const CommandLine = styled.div`
  flex: 1;
  display: flex;
  align-items: flex-end;
  padding-left: 1px;
  border-top: 2px solid #000;
  border-left: 1px solid #000;
  background: #fff;
`;

const Prompt = styled.label`
  font-family: 'Liberation Mono', 'Noto Sans CJK SC', monospace;
  font-size: 13px;
  line-height: 14px;
  white-space: pre;
`;

const PromptCjk = styled.span`
  font-size: 15px;
`;

const CommandInput = styled.input`
  flex: 1;
  height: 14px;
  outline: none;
`;

const StatusBar = styled.footer`
  flex: none;
  display: flex;
  align-items: center;
  gap: 4px;
  height: 24px;
  padding: 0 2px 0 5px;
  border-top: 1px solid #8a8a8a;
`;

const Coordinates = styled.output`
  width: 243px;
  height: 18px;
  padding-left: 1px;
  border: 1px solid #9a9a9a;
  border-right-color: #ccc;
  border-bottom-color: #ccc;
  font-family: 'DejaVu Sans Mono', monospace;
  font-size: 10px;
  line-height: 18px;
  white-space: pre;
`;

const Toggle = styled.button`
  display: grid;
  place-items: center;
  width: 19px;
  height: 19px;
  border: 1px solid;
  border-color: ${props => (props['aria-pressed'] ? '#000 #fff #fff #000' : '#fff #a0a0a0 #a0a0a0 #fff')};
`;

const StatusEnd = styled.div`
  flex: 1;
  display: flex;
  justify-content: flex-end;
  align-items: flex-end;
  gap: 8px;
`;

const SizeGrip = styled.span`
  width: 10px;
  height: 10px;
  background: radial-gradient(#222 1px, transparent 1px) 0 0 / 4px 4px;
  clip-path: polygon(100% 0, 100% 100%, 0 100%);
`;

/* ---------- site stamp ---------- */

const Stamp = styled.div`
  position: absolute;
  right: 49px;
  bottom: 14px;
  width: 177px;
  color: rgba(255, 255, 255, 0.85);
  pointer-events: none;
  -webkit-text-stroke: 1px rgba(212, 212, 212, 0.85);
`;

const StampName = styled.div`
  display: flex;
  align-items: flex-end;
  justify-content: space-between;
  height: 60px;
  font-family: 'Liberation Sans', 'Noto Sans CJK SC', sans-serif;
  font-size: 39px;
  font-weight: 700;
  line-height: 38px;
`;

const StampCjk = styled.span`
  font-size: 31px;
`;

const StampUrl = styled.div`
  font-family: 'Liberation Sans', sans-serif;
  font-size: 22px;
  line-height: 24px;
`;

const Paw = styled.svg`
  width: 54px;
  height: 60px;
`;

const PawText = styled.text`
  font-size: 34px;
  text-anchor: middle;
  fill: #fff;
  stroke: #c4c4c4;
  stroke-width: 1px;
`;

const FILE_TOOLS = ['New', 'Open', 'Save', '|', 'Print', 'Print preview', 'Publish', '|', 'Cut', 'Copy', 'Paste', 'Match properties', '|'];
const VIEW_TOOLS = ['|', 'Pan', 'Zoom realtime', 'Zoom window', 'Zoom previous', '|', 'Properties', 'Design center', 'Tool palettes', '|', 'Help'];
const SHADE_TOOLS = ['2D wireframe', '3D wireframe', '3D hidden', 'Flat shaded', 'Gouraud shaded', 'Flat with edges', 'Gouraud with edges'];
const SOLID_TOOLS = ['Box', 'Sphere', 'Cylinder', 'Cone', 'Wedge', 'Torus', '|', 'Extrude', 'Revolve', '|', 'Slice', 'Section', 'Interfere', 'Solid profile'];
const VIEWPOINT_TOOLS = ['Named views', '|', 'Top view', 'Bottom view', 'Left view', 'Right view', 'Front view', 'Back view', '|', 'SW isometric', 'SE isometric', 'NE isometric', 'NW isometric', '|'];
const DRAW_TOOLS = ['Line', 'Construction line', 'Polyline', 'Polygon', 'Rectangle', 'Arc', 'Circle', 'Revision cloud', 'Spline', 'Ellipse', 'Ellipse arc', 'Insert block', 'Make block', 'Point', 'Hatch', 'Region', 'Table', 'Multiline text'];
const MODIFY_TOOLS = ['Erase', 'Copy object', 'Mirror', 'Offset', 'Array', 'Move', 'Rotate', 'Scale', 'Stretch', 'Trim', 'Extend', 'Break at point', 'Break', 'Chamfer', 'Fillet', 'Explode'];
const DIM_TOOLS = ['Linear dimension', 'Aligned dimension', 'Arc length', 'Ordinate', '|', 'Radius', 'Jogged', 'Diameter', 'Angular', '|', 'Quick dimension', 'Baseline', 'Continue', 'Dimension space', '|', 'Leader', 'Tolerance', 'Center mark', 'Inspect', 'Jogged linear', '|', 'Dimension edit', 'Dimension oblique', 'Dimension text'];

const MENUS = [
  ['文件', 'F'], ['编辑', 'E'], ['视图', 'V'], ['插入', 'I'], ['格式', 'O'], ['工具', 'T'],
  ['绘图', 'D'], ['标注', 'N'], ['修改', 'M'], ['扩展工具', 'X'], ['窗口', 'W'], ['帮助', 'H'],
];

const STATUS_TOGGLES = ['Snap', 'Grid', 'Ortho', 'Polar', 'Object snap', 'Object tracking', 'Line weight', 'Model space'];

const App = () => {
  const [layout, setLayout] = useState('模型');
  const [command, setCommand] = useState('');
  const [active, setActive] = useState(['Ortho', 'Object snap', 'Model space']);

  const toggle = (name) => {
    setActive(active.includes(name) ? active.filter(item => item !== name) : [...active, name]);
  };

  const layoutTab = (name) => (
    <LayoutTab type="button" $active={layout === name} onClick={() => setLayout(name)}>{name}</LayoutTab>
  );

  return (
    <Desktop>
      <GlobalStyle />
      <Defs aria-hidden="true">
        <defs>
          <linearGradient id="face" x1="0" y1="0" x2="0" y2="1">
            <stop offset="0" stopColor="#e8f1ff" />
            <stop offset="1" stopColor="#a3c2f6" />
          </linearGradient>
          <linearGradient id="faceDark" x1="0" y1="0" x2="0" y2="1">
            <stop offset="0" stopColor="#a5c1f1" />
            <stop offset="1" stopColor="#5f88d6" />
          </linearGradient>
          <radialGradient id="ball" cx=".35" cy=".3" r=".8">
            <stop offset="0" stopColor="#c4d8f9" />
            <stop offset="1" stopColor="#4f74b8" />
          </radialGradient>
        </defs>
      </Defs>

      <Window>
        <TitleBar>
          <Logo />
          <Title><Cjk>中望</Cjk>CAD+ 2012 <Cjk>专业版</Cjk> - [Drawing1.dwg]</Title>
          <WindowButtons>
            <WindowButton type="button" aria-label="Minimize">
              <svg width="13" height="11" stroke="#fff" strokeWidth="3"><path d="M1 6H12" /></svg>
            </WindowButton>
            <WindowButton type="button" aria-label="Maximize">
              <svg width="11" height="10" stroke="#fff" strokeWidth="2" fill="none"><path d="M1 2H10V9H1ZM3 5.500H8" /></svg>
            </WindowButton>
            <WindowButton type="button" $wide aria-label="Close">
              <svg width="11" height="10" stroke="#fff" strokeWidth="3"><path d="M1 1 10 9M10 1 1 9" /></svg>
            </WindowButton>
          </WindowButtons>
        </TitleBar>

        <MenuBar>
          <DwgFile />
          <MenuList>
            {MENUS.map(([label, key]) => (
              <MenuItem key={key} type="button">{label}(<u>{key}</u>)</MenuItem>
            ))}
          </MenuList>
          <ChildButtons>
            <ChildButton type="button" aria-label="Minimize drawing">
              <svg width="9" height="9" stroke="#5b7590" strokeWidth="2"><path d="M2 7H8" /></svg>
            </ChildButton>
            <ChildButton type="button" aria-label="Restore drawing">
              <svg width="9" height="9" stroke="#5b7590" fill="none"><path d="M3 3V1H8V5H6M1 4.500H6V8.500H1ZM1 5.500H6" /></svg>
            </ChildButton>
            <ChildButton type="button" aria-label="Close drawing">
              <svg width="9" height="9" stroke="#777" strokeWidth="2"><path d="M1 1 8 8M8 1 1 8" /></svg>
            </ChildButton>
          </ChildButtons>
        </MenuBar>

        <ToolRow>
          <ToolGroup>
            <Grip />
            <Tools names={FILE_TOOLS} />
            <Tools names={['Undo']} />
            <CaretButton type="button" aria-label="Undo list"><Caret /></CaretButton>
            <Tools names={['Redo']} />
            <CaretButton type="button" aria-label="Redo list"><Caret /></CaretButton>
            <Tools names={VIEW_TOOLS} />
          </ToolGroup>
          <ToolGroup>
            <Grip />
            <Tools names={['Text style']} />
            <Combo label="Text style list" value="Standard" width={96} />
            <Tools names={['|', 'Dimension style']} />
            <Combo label="Dimension style list" value="ISO-25" width={96} />
            <Tools names={['|', 'Table style']} />
            <Combo label="Table style list" value="Standard" width={96} />
          </ToolGroup>
          <ToolGroup $open>
            <Grip />
            <Tools names={['Snap from', 'Snap to extension', '|', 'Snap to endpoint']} />
          </ToolGroup>
        </ToolRow>

        <ToolRow>
          <ToolGroup>
            <Grip />
            <Tools names={['Layer properties']} />
            <Combo label="Layer" value="0" width={290}>
              <LayerFlags>
                <Icon name="Bulb" size={14} />
                <Icon name="Sun" size={14} />
                <Icon name="Plot" size={15} />
                <Icon name="Lock" size={15} />
                <Swatch />
              </LayerFlags>
            </Combo>
            <Tools names={['Layer current', 'Layer previous', 'Layer states']} />
          </ToolGroup>
          <ToolGroup>
            <Grip />
            <Combo label="Color" value="ByLayer" width={145} inset={4}><Swatch /></Combo>
            <Divider />
            <Combo label="Line type" value="ByLayer" width={154} inset={3}><Stroke $length={58} /></Combo>
            <Divider />
            <Combo label="Line weight list" value="ByLayer" width={120} inset={3}><Stroke $length={34} /></Combo>
            <Divider />
            <Combo label="Plot style" value="ByColor" width={115} inset={7} />
          </ToolGroup>
        </ToolRow>

        <ToolRow>
          <ToolGroup>
            <Grip />
            <Tools names={SHADE_TOOLS} />
          </ToolGroup>
          <ToolGroup>
            <Grip />
            <Tools names={SOLID_TOOLS} />
          </ToolGroup>
          <ToolGroup>
            <Grip />
            <Tools names={VIEWPOINT_TOOLS} />
            <Combo label="Viewpoint" value="" width={135} />
          </ToolGroup>
          <ToolGroup $open>
            <Grip />
            <Tools names={['Union', 'Subtract', 'Intersect', '|', 'Extrude faces']} />
          </ToolGroup>
        </ToolRow>

        <Work>
          <SideColumn $width={25}>
            <SideTools names={DRAW_TOOLS} tail />
            <SideTools names={['Single text', 'Edit text']} />
          </SideColumn>
          <SideColumn $width={26}>
            <SideTools names={MODIFY_TOOLS} tail />
            <SideTools names={['Draw order', '|', 'Edit hatch', 'Edit polyline', 'Edit spline']} />
          </SideColumn>

          <Document>
            <TabBar>
              <FileTab type="button"><DwgFile />Drawing1.dwg</FileTab>
              <TabArrows>
                <ArrowButton type="button" aria-label="Previous drawing">
                  <svg width="6" height="9" fill="#fff" stroke="#000"><path d="M5 1V8L1 4.500Z" /></svg>
                </ArrowButton>
                <ArrowButton type="button" aria-label="Next drawing">
                  <svg width="6" height="9" fill="#fff" stroke="#000"><path d="M1 1V8L5 4.500Z" /></svg>
                </ArrowButton>
                <ArrowButton type="button" aria-label="Drawing list"><Caret $size={5} $color="#000" /></ArrowButton>
              </TabArrows>
            </TabBar>

            <Viewport>
              <Canvas>
                <Drawing stroke="#fff" fill="none" aria-hidden="true">
                  <path d="M309 120.500H453.500V273.500H183.500" shapeRendering="crispEdges" />
                  <path d="M183.500 273.500 264.500 121" />
                  <path d="M218 120.500H264M264.500 75V166" shapeRendering="crispEdges" />
                  <rect x="259" y="115" width="11" height="11" stroke="#f2f08a" strokeWidth="2" shapeRendering="crispEdges" />
                </Drawing>
                <SnapTip>端点</SnapTip>
                <UcsMark viewBox="0 -8 96 112" stroke="#fff" fill="none">
                  <path d="M6.500 81V14M10 85.500H74" />
                  <rect x="2.500" y="81.500" width="8" height="8" />
                  <path d="M3.500 24 6.500 16 9.500 24M68 82.500 76 85.500 68 88.500" />
                  <text x="4" y="9" fill="#ddd" stroke="none">Y</text>
                  <text x="83" y="91" fill="#ddd" stroke="none">X</text>
                </UcsMark>
              </Canvas>
              <VScroll>
                <ScrollButton type="button" aria-label="Scroll up">
                  <svg width="9" height="6" fill="#ccc" stroke="#444"><path d="M1 5 4.500 1 8 5" /></svg>
                </ScrollButton>
                <ScrollButton type="button" $thumb aria-label="Scroll position"><Lines /></ScrollButton>
                <ScrollButton type="button" aria-label="Scroll down">
                  <svg width="9" height="6" fill="#eee" stroke="#666"><path d="M1 1 4.500 5 8 1Z" /></svg>
                </ScrollButton>
              </VScroll>
            </Viewport>

            <LayoutBar>
              <LayoutTabs>
                <Steppers>
                  {['M2 1V9M8 1V9L4 5Z', 'M7 1V9L3 5Z', 'M3 1V9L7 5Z', 'M2 1V9L6 5ZM8 1V9'].map((d, i) => (
                    <ArrowButton key={d} type="button" aria-label={['First layout', 'Previous layout', 'Next layout', 'Last layout'][i]}>
                      <svg width="9" height="10" stroke="#b5b5b5" fill="#b5b5b5"><path d={d} /></svg>
                    </ArrowButton>
                  ))}
                </Steppers>
                <Slash><path d="M1 0 8 14H10" /></Slash>
                {layoutTab('模型')}
                <Slash><path d="M8 0 1 14M4 7 8 14" /></Slash>
                {layoutTab('布局1')}
                <Slash><path d="M1 0 8 14M5 7 2 14" /></Slash>
                {layoutTab('布局2')}
                <Slash><path d="M9 0 2 14" /></Slash>
              </LayoutTabs>
              <HScroll>
                <HScrollButton type="button" aria-label="Scroll left">
                  <svg width="5" height="8"><path d="M5 0V8L0 4Z" /></svg>
                </HScrollButton>
                <ArrowButton type="button" aria-label="Scroll right">
                  <svg width="9" height="8"><path d="M0 0V8L4 4Z" /></svg>
                </ArrowButton>
              </HScroll>
            </LayoutBar>
          </Document>

          <SideColumn $width={26}>
            <SideTools names={DIM_TOOLS} />
          </SideColumn>
        </Work>

        <CommandBar>
          <CommandHandle type="button" aria-label="Close command line">x</CommandHandle>
          <CommandLine>
            <Prompt htmlFor="command">
              <PromptCjk>指定下一点或</PromptCjk> [<PromptCjk>放弃</PromptCjk>(U)]:
            </Prompt>
            <CommandInput id="command" value={command} onChange={e => setCommand(e.target.value)} />
          </CommandLine>
        </CommandBar>

        <StatusBar>
          <Coordinates>288.8869, 360.5034, 0.0000</Coordinates>
          {STATUS_TOGGLES.map(name => (
            <Toggle key={name} type="button" aria-label={name} aria-pressed={active.includes(name)} onClick={() => toggle(name)}>
              <Icon name={name} />
            </Toggle>
          ))}
          <StatusEnd>
            <Caret $size={4} $color="#11701b" />
            <SizeGrip />
          </StatusEnd>
        </StatusBar>

        <Stamp>
          <StampName>
            Bai
            <Paw viewBox="0 0 54 60" fill="#fff">
              <g fillOpacity=".75">
                <ellipse cx="8" cy="22" rx="6" ry="8" />
                <ellipse cx="21" cy="10" rx="6" ry="8" />
                <ellipse cx="36" cy="11" rx="6" ry="8" />
                <ellipse cx="46" cy="26" rx="6" ry="8" />
              </g>
              <path d="M27 24C34 24 36 31 42 36 52 45 48 57 37 56 30 55 24 55 17 56 5 57 2 45 12 36 18 31 20 24 27 24Z" fillOpacity=".9" stroke="#ddd" />
              <PawText x="27" y="54">du</PawText>
            </Paw>
            <StampCjk>经验</StampCjk>
          </StampName>
          <StampUrl>jingyan.baidu.com</StampUrl>
        </Stamp>
      </Window>
    </Desktop>
  );
};

export default App;
